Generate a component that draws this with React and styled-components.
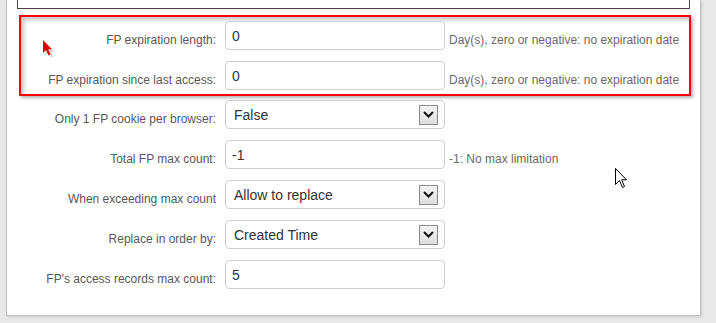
import React from "react";
import styled, { createGlobalStyle } from "styled-components";

const GlobalStyle = createGlobalStyle`
  html, body {
    margin: 0;
    padding: 0;
    background: #e8e8e8;
    font-family: "Liberation Sans", Arial, sans-serif;
  }
`;

const Page = styled.div`
  position: relative;
  width: 716px;
  height: 323px;
  overflow: hidden;
  background: #e8e8e8;
`;

const Panel = styled.div`
  margin-left: 6px;
  width: 695px;
  box-sizing: border-box;
  background: #fff;
  border: 1px solid #c2c2c2;
  border-top: none;
  box-shadow: 1px 1px 2px rgba(0, 0, 0, 0.12);
  padding: 0 10px 26px 10px;
`;

const TopBox = styled.div`
  width: 673px;
  height: 8px;
  box-sizing: content-box;
  border: 1px solid #444;
  border-top: none;
  box-sizing: border-box;
  height: 9px;
`;

const Highlight = styled.div`
  margin: 6px 0 0 2px;
  width: 672px;
  box-sizing: border-box;
  border: 2px solid #ff0000;
  padding: 4px 0;
  display: flex;
  flex-direction: column;
  gap: 11px;
  box-shadow: inset 3px 3px 4px rgba(0, 0, 0, 0.22), 2px 2px 3px rgba(0, 0, 0, 0.3);
`;

const Fields = styled.div`
  margin-top: 4px;
  padding-left: 4px;
  display: flex;
  flex-direction: column;
  gap: 11px;
`;

const Row = styled.div`
  display: flex;
  align-items: flex-end;
  height: 29px;
`;

const Label = styled.div`
  width: 195px;
  flex: none;
  margin-right: 9px;
  text-align: right;
  font-size: 12px;
  line-height: 14px;
  padding-bottom: 3px;
  color: #585858;
  white-space: nowrap;
`;

const TextInput = styled.input`
  width: 220px;
  height: 29px;
  box-sizing: border-box;
  border: 1px solid #cfcfcf;
  border-radius: 4px;
  padding: 0 6px;
  margin: 0;
  font-family: "Liberation Sans", Arial, sans-serif;
  font-size: 14px;
  color: #333;
  background: #fff;
  outline: none;
  align-self: stretch;
`;

const Select = styled.div`
  width: 220px;
  height: 29px;
  box-sizing: border-box;
  border: 1px solid #cfcfcf;
  border-radius: 4px;
  padding: 0 6px 0 8px;
  display: flex;
  align-items: center;
  justify-content: space-between;
  font-size: 14px;
  color: #333;
  align-self: stretch;
`;

const ArrowBox = styled.div`
  width: 19px;
  height: 20px;
  box-sizing: border-box;
  border: 1px solid #8a8a8a;
  background: linear-gradient(#f4f4f4, #dedede);
  display: flex;
  align-items: center;
  justify-content: center;
`;

const Hint = styled.div`
  margin-left: 4px;
  font-size: 12px;
  line-height: 14px;
  padding-bottom: 3px;
  color: #6a6a6a;
  white-space: nowrap;
`;

const Cursor = styled.svg`
  position: absolute;
  left: ${(p) => p.$x}px;
  top: ${(p) => p.$y}px;
  pointer-events: none;
`;

function Chevron() {
  return (
    <svg width="11" height="7" viewBox="0 0 11 7">
      <path d="M1 1 L5.5 5.5 L10 1" fill="none" stroke="#111" strokeWidth="2" />
    </svg>
  );
}

function Field({ label, value, hint, select }) {
  return (
    <Row>
      <Label>{label}</Label>
      {select ? (
        <Select>
          <span>{value}</span>
          <ArrowBox>
            <Chevron />
          </ArrowBox>
        </Select>
      ) : (
        <TextInput readOnly defaultValue={value} />
      )}
      {hint && <Hint>{hint}</Hint>}
    </Row>
  );
}

const expiryHint = "Day(s), zero or negative: no expiration date";

export default function App() {
  return (
    <Page>
      <GlobalStyle />
      <Panel>
        <TopBox />
        <Highlight>
          <Field label="FP expiration length:" value="0" hint={expiryHint} />
          <Field label="FP expiration since last access:" value="0" hint={expiryHint} />
        </Highlight>
        <Fields>
          <Field label="Only 1 FP cookie per browser:" value="False" select />
          <Field label="Total FP max count:" value="-1" hint="-1: No max limitation" />
          <Field label="When exceeding max count" value="Allow to replace" select />
          <Field label="Replace in order by:" value="Created Time" select />
          <Field label="FP's access records max count:" value="5" />
        </Fields>
      </Panel>
      <Cursor $x={43} $y={40} width="14" height="20" viewBox="0 0 14 20">
        <path d="M1.5 1.5 L1.5 14.5 L4.5 11.5 L7 17 L9 16 L6.7 10.8 L10.5 10.8 Z" fill="#bbb" opacity="0.6" transform="translate(1 1)" />
        <path d="M0 0 L0 13 L3 10 L5.5 15.5 L7.5 14.5 L5.2 9.3 L9 9.3 Z" fill="#e00000" />
      </Cursor>
      <Cursor $x={615} $y={168} width="14" height="21" viewBox="0 0 14 21">
        <path d="M0.5 0.5 L0.5 16.5 L4.5 12.5 L7.5 19.5 L9.5 18.5 L6.7 11.8 L11.5 11.8 Z" fill="#fff" stroke="#000" strokeWidth="1" />
      </Cursor>
    </Page>
  );
}
